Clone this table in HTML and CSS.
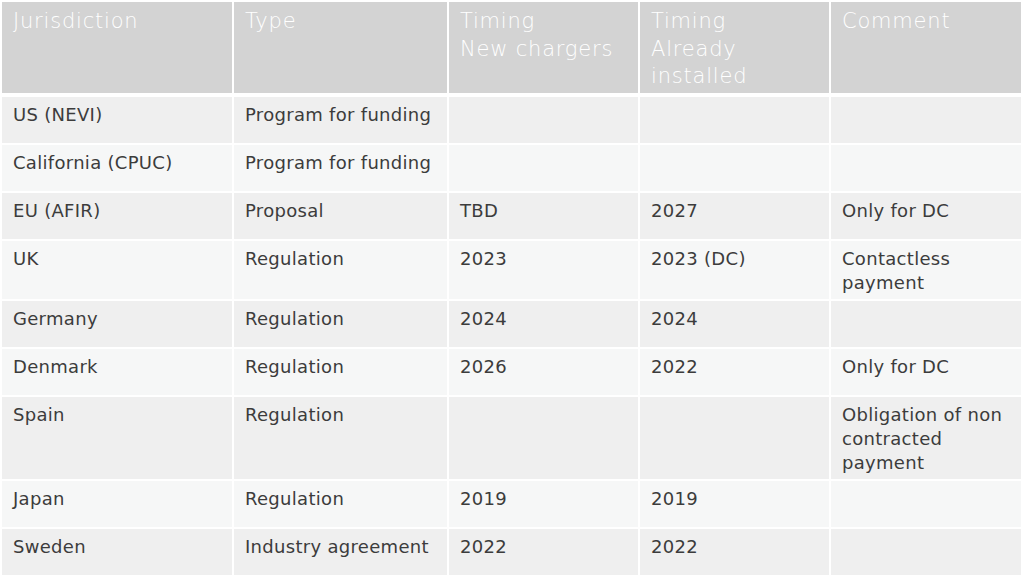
FILE: index.html
```html
<!DOCTYPE html>
<html lang="en">
<head>
<meta charset="utf-8">
<title>Charger payment rules</title>
<link rel="stylesheet" href="styles.css">
</head>
<body>
<table class="grid">
  <colgroup>
    <col class="c1"><col class="c2"><col class="c3"><col class="c4"><col class="c5">
  </colgroup>
  <thead>
    <tr class="head">
      <th>Jurisdiction</th>
      <th>Type</th>
      <th>Timing<br>New chargers</th>
      <th>Timing<br>Already<br>installed</th>
      <th>Comment</th>
    </tr>
  </thead>
  <tbody>
    <tr class="odd"><td>US (NEVI)</td><td>Program for funding</td><td></td><td></td><td></td></tr>
    <tr class="even"><td>California (CPUC)</td><td>Program for funding</td><td></td><td></td><td></td></tr>
    <tr class="odd"><td>EU (AFIR)</td><td>Proposal</td><td>TBD</td><td>2027</td><td>Only for DC</td></tr>
    <tr class="even"><td>UK</td><td>Regulation</td><td>2023</td><td>2023 (DC)</td><td>Contactless<br>payment</td></tr>
    <tr class="odd"><td>Germany</td><td>Regulation</td><td>2024</td><td>2024</td><td></td></tr>
    <tr class="even"><td>Denmark</td><td>Regulation</td><td>2026</td><td>2022</td><td>Only for DC</td></tr>
    <tr class="odd"><td>Spain</td><td>Regulation</td><td></td><td></td><td>Obligation of non<br>contracted<br>payment</td></tr>
    <tr class="even"><td>Japan</td><td>Regulation</td><td>2019</td><td>2019</td><td></td></tr>
    <tr class="odd"><td>Sweden</td><td>Industry agreement</td><td>2022</td><td>2022</td><td></td></tr>
  </tbody>
</table>
</body>
</html>
```

FILE: styles.css
```css
html, body {
  margin: 0;
  padding: 0;
  background: #ffffff;
}
body {
  font-family: "DejaVu Sans", "Lato", sans-serif;
  color: #3c3c3c;
}
.grid {
  border-collapse: separate;
  border-spacing: 2px;
  table-layout: fixed;
  width: 1023px;
}
.c1 { width: 230px; }
.c2 { width: 213px; }
.c3 { width: 189px; }
.c4 { width: 189px; }
.c5 { width: 190px; }
.grid th, .grid td {
  text-align: left;
  vertical-align: top;
  padding: 0 4px 0 11px;
  white-space: nowrap;
}
.head th {
  background: #d3d3d3;
  color: #ffffff;
  font-weight: 200;
  font-size: 21px;
  line-height: 27.5px;
  letter-spacing: 0.8px;
  height: 93px;
  padding-top: 6px;
  box-sizing: border-box;
  border-bottom: 2px solid #ffffff;
}
.grid td {
  font-size: 18px;
  line-height: 24px;
  letter-spacing: 0.3px;
  height: 46px;
  box-sizing: border-box;
  padding-top: 6px;
  padding-bottom: 4px;
}
.odd td { background: #efefef; }
.even td { background: #f6f7f7; }
```
